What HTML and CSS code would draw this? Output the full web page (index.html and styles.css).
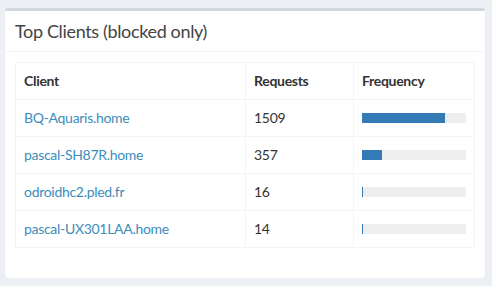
FILE: index.html
```html
<!DOCTYPE html>
<html lang="en">
<head>
    <meta charset="UTF-8">
    <meta name="viewport" content="width=device-width, initial-scale=1.0">
    <title>Top Clients</title>
    <link rel="stylesheet" href="styles.css">
</head>
<body>
    <div class="wrapper">
        <div class="box">
            <div class="box-header">
                <h3 class="box-title">Top Clients (blocked only)</h3>
            </div>
            <div class="box-body">
                <table class="table">
                    <thead>
                        <tr>
                            <th class="col-client">Client</th>
                            <th class="col-requests">Requests</th>
                            <th>Frequency</th>
                        </tr>
                    </thead>
                    <tbody>
                        <tr>
                            <td><a href="#">BQ-Aquaris.home</a></td>
                            <td>1509</td>
                            <td><div class="progress"><div class="progress-bar" style="width: 80%"></div></div></td>
                        </tr>
                        <tr>
                            <td><a href="#">pascal-SH87R.home</a></td>
                            <td>357</td>
                            <td><div class="progress"><div class="progress-bar" style="width: 18.9%"></div></div></td>
                        </tr>
                        <tr>
                            <td><a href="#">odroidhc2.pled.fr</a></td>
                            <td>16</td>
                            <td><div class="progress"><div class="progress-bar" style="width: 0.85%"></div></div></td>
                        </tr>
                        <tr>
                            <td><a href="#">pascal-UX301LAA.home</a></td>
                            <td>14</td>
                            <td><div class="progress"><div class="progress-bar" style="width: 0.74%"></div></div></td>
                        </tr>
                    </tbody>
                </table>
            </div>
        </div>
    </div>
</body>
</html>
```

FILE: styles.css
```css
* {
    box-sizing: border-box;
    margin: 0;
    padding: 0;
}

body {
    font-family: Lato, "Liberation Sans", sans-serif;
    font-size: 14px;
    line-height: 1.42857;
    letter-spacing: -0.3px;
    color: #333;
    background: #ecf0f5;
}

.wrapper {
    padding: 8px 7px 0 5px;
}

/* panel */
.box {
    background: #fff;
    border-top: 3px solid #d2d6de;
    border-radius: 3px;
    box-shadow: 0 1px 1px rgba(0,0,0,0.1);
}

.box-header {
    padding: 10px;
    border-bottom: 1px solid #f4f4f4;
}

.box-title {
    font-size: 18px;
    font-weight: 400;
    line-height: 20px;
    letter-spacing: -0.35px;
    color: #444;
}

.box-body {
    padding: 10px;
}

/* table */
.table {
    width: 100%;
    border-collapse: collapse;
    margin-bottom: 20px;
}

.table th,
.table td {
    border: 1px solid #f4f4f4;
    padding: 8px;
    text-align: left;
    vertical-align: middle;
    height: 37px;
}

.table th {
    font-weight: 700;
}

.col-client {
    width: 230px;
}

.col-requests {
    width: 108px;
}

.table a {
    color: #3c8dbc;
    text-decoration: none;
}

/* frequency bar */
.progress {
    height: 10px;
    background: #eee;
    overflow: hidden;
}

.progress-bar {
    height: 100%;
    background: #337ab7;
}
```
